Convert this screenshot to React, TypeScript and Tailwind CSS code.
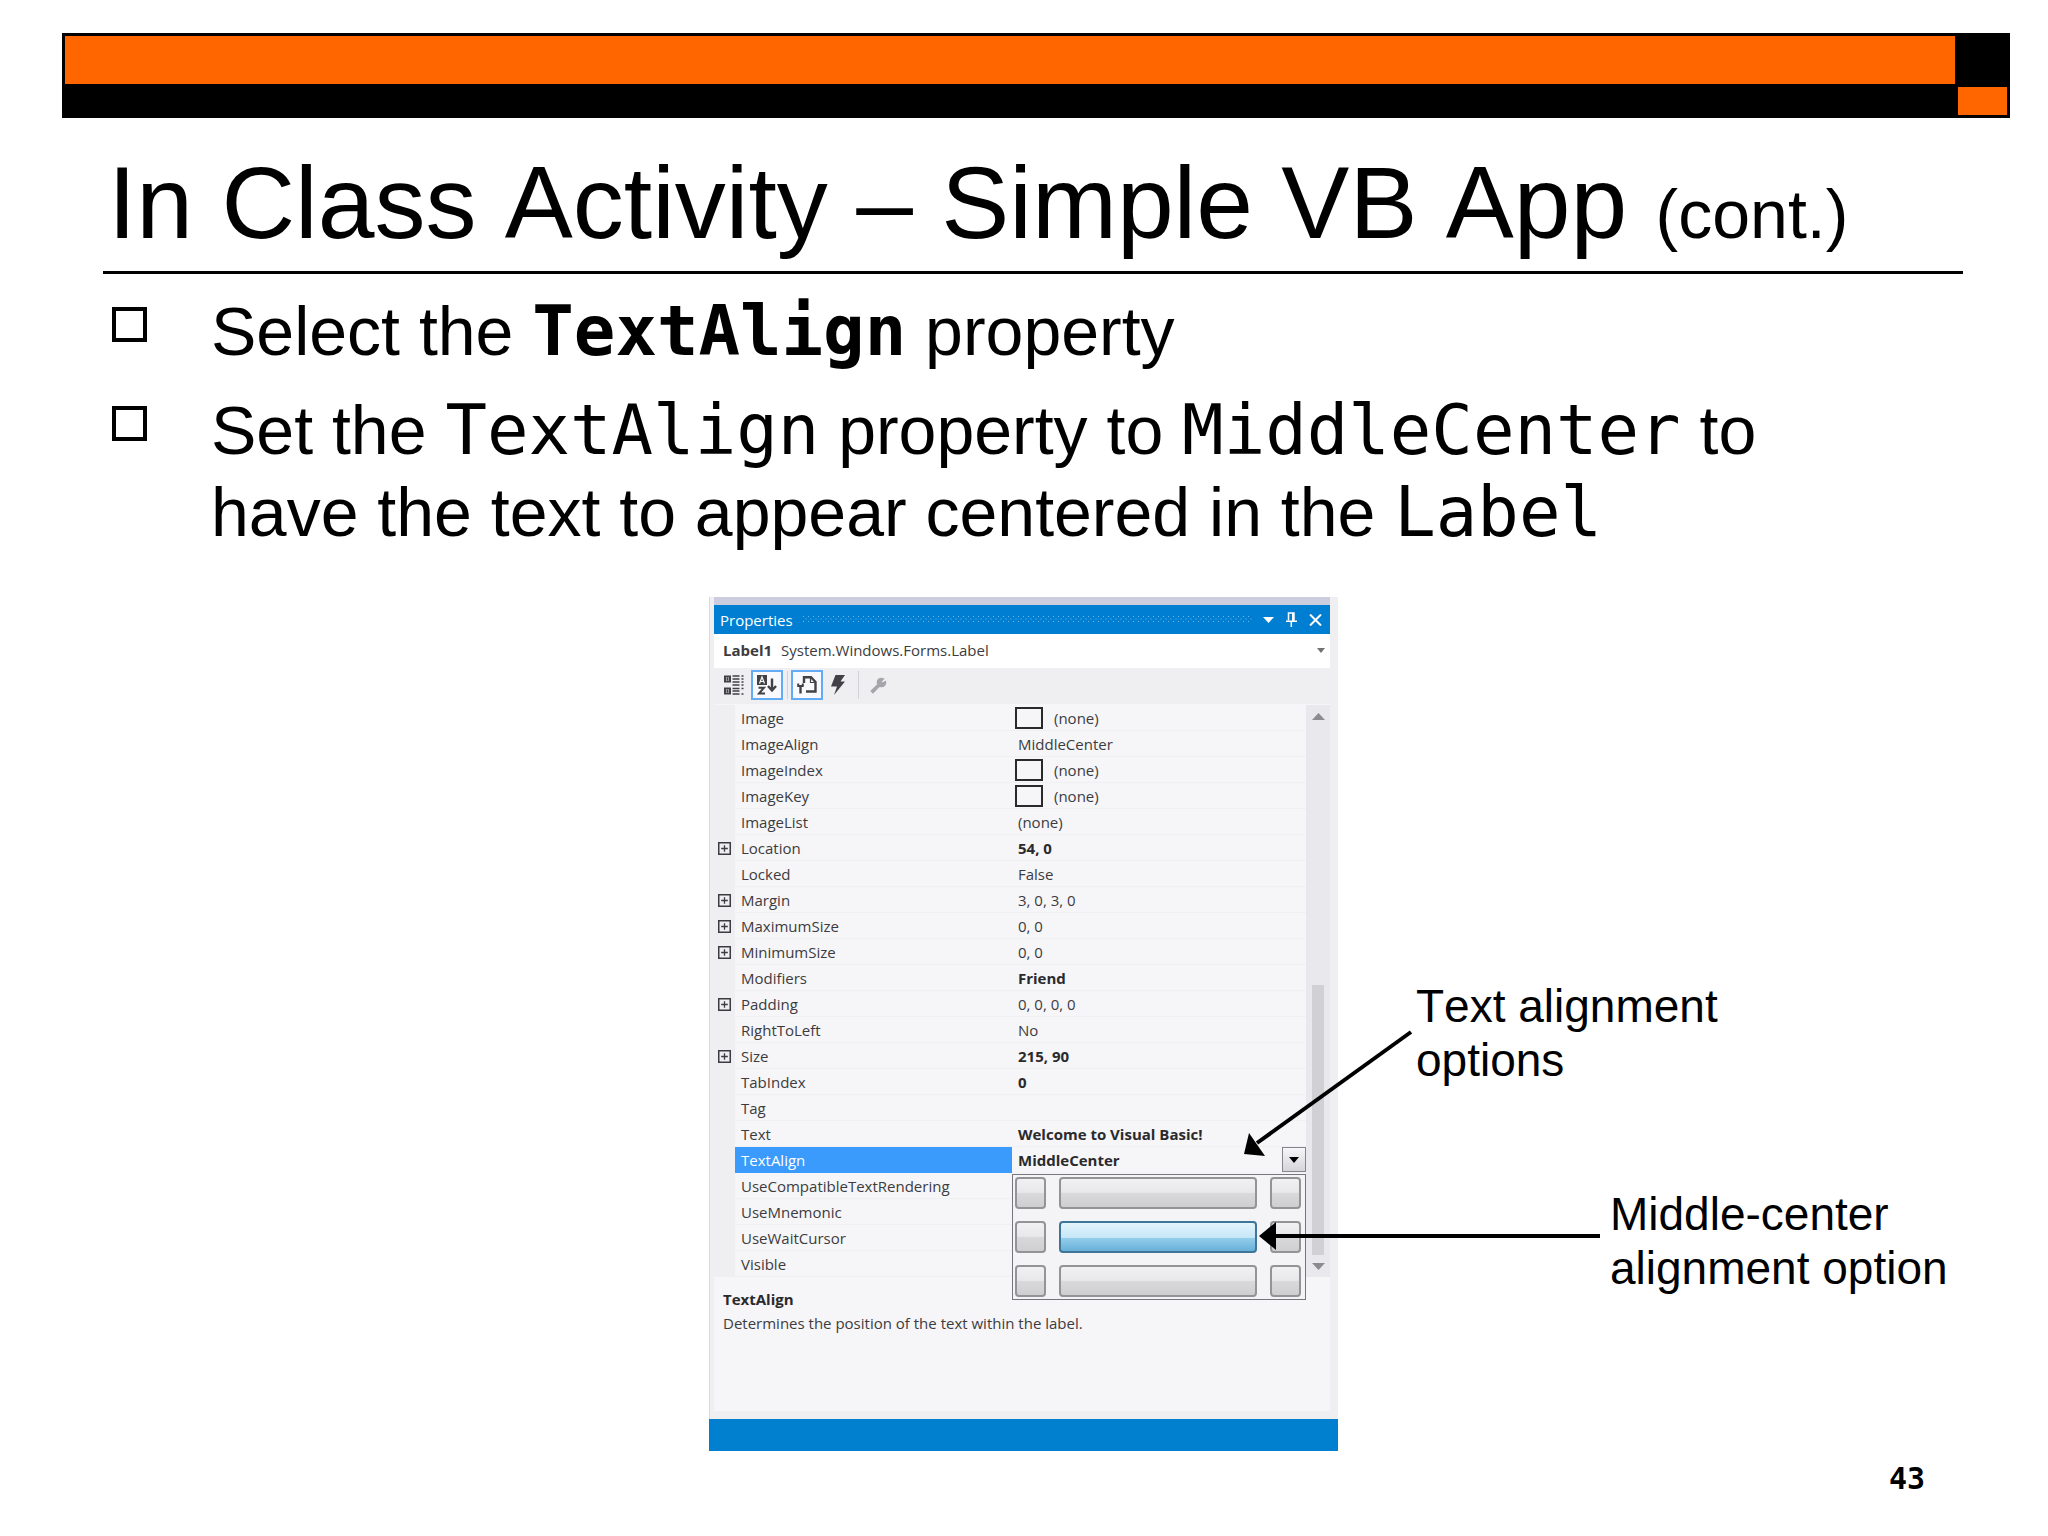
import type { ReactNode } from "react";

type Property = {
  name: string;
  value: string;
  expandable?: boolean;
  swatch?: boolean;
  bold?: boolean;
};

const properties: Property[] = [
  { name: "Image", value: "(none)", swatch: true },
  { name: "ImageAlign", value: "MiddleCenter" },
  { name: "ImageIndex", value: "(none)", swatch: true },
  { name: "ImageKey", value: "(none)", swatch: true },
  { name: "ImageList", value: "(none)" },
  { name: "Location", value: "54, 0", expandable: true, bold: true },
  { name: "Locked", value: "False" },
  { name: "Margin", value: "3, 0, 3, 0", expandable: true },
  { name: "MaximumSize", value: "0, 0", expandable: true },
  { name: "MinimumSize", value: "0, 0", expandable: true },
  { name: "Modifiers", value: "Friend", bold: true },
  { name: "Padding", value: "0, 0, 0, 0", expandable: true },
  { name: "RightToLeft", value: "No" },
  { name: "Size", value: "215, 90", expandable: true, bold: true },
  { name: "TabIndex", value: "0", bold: true },
  { name: "Tag", value: "" },
  { name: "Text", value: "Welcome to Visual Basic!", bold: true },
  { name: "TextAlign", value: "MiddleCenter", bold: true },
  { name: "UseCompatibleTextRendering", value: "" },
  { name: "UseMnemonic", value: "" },
  { name: "UseWaitCursor", value: "" },
  { name: "Visible", value: "" },
];

const SELECTED = "TextAlign";

const alignments = [
  "TopLeft",
  "TopCenter",
  "TopRight",
  "MiddleLeft",
  "MiddleCenter",
  "MiddleRight",
  "BottomLeft",
  "BottomCenter",
  "BottomRight",
];

function Banner() {
  return (
    <div className="flex h-[85px] bg-black" aria-hidden="true">
      <div className="flex-1 pt-[3px] pl-[3px]">
        <div className="h-12 bg-[#ff6600]" />
      </div>
      <div className="flex w-[55px] flex-col justify-end border-[3px] border-black">
        <div className="h-7 bg-[#ff6600]" />
      </div>
    </div>
  );
}

function Bullet({ children }: { children: ReactNode }) {
  return (
    <li className="flex">
      <span className="mt-[17px] mr-16 size-[35px] shrink-0 border-4 border-black" />
      <p>{children}</p>
    </li>
  );
}

function Code({ children }: { children: ReactNode }) {
  return (
    <code className="font-['DejaVu_Sans_Mono',monospace] text-[69px] leading-none">{children}</code>
  );
}

function TitleBar() {
  return (
    <div className="flex h-[29px] items-center bg-[#007fd2] pr-2 pl-[6px] text-white">
      <h2>Properties</h2>
      <svg className="mx-[10px] h-[7px] flex-1" aria-hidden="true">
        <defs>
          <pattern id="grip" width="5" height="5" patternUnits="userSpaceOnUse">
            <rect width="1" height="1" fill="#6cb8ea" />
            <rect x="2.5" y="2.5" width="1" height="1" fill="#6cb8ea" />
          </pattern>
        </defs>
        <rect width="100%" height="7" fill="url(#grip)" />
      </svg>
      <div className="flex items-center gap-3">
        <button aria-label="Window position">
          <svg width="11" height="6" viewBox="0 0 11 6">
            <path d="M0 0h11L5.500 6z" fill="#fff" />
          </svg>
        </button>
        <button aria-label="Auto hide">
          <svg width="11" height="15" viewBox="0 0 11 15" fill="none" stroke="#fff">
            <path d="M2.500 8.500V1h5.500v8" strokeWidth="1.500" />
            <path d="M7 1v8" strokeWidth="2" />
            <path d="M0 9.300h11M5.300 9.500V15" strokeWidth="1.500" />
          </svg>
        </button>
        <button aria-label="Close">
          <svg width="13" height="12" viewBox="0 0 13 12" stroke="#fff" strokeWidth="2">
            <path d="M1 .5l11 11M12 .5l-11 11" />
          </svg>
        </button>
      </div>
    </div>
  );
}

function Toolbar() {
  return (
    <div className="flex h-9 items-center bg-[#efeef1] pb-[2px] pl-[10px] text-[#424246]">
      <button aria-label="Categorized" className="mr-[7px]">
        <svg width="20" height="20" viewBox="0 0 20 20" fill="none" stroke="currentColor">
          <path d="M1 1.500h5v5H1zM1 13.500h5v5H1z" strokeWidth="2" />
          <path d="M2 4h3M3.500 2.500v3M2 16h3M3.500 14.500v3" />
          <path
            d="M8.500 1h7M8.500 4h7M8.500 7h7M8.500 10h7M8.500 13.500h7M8.500 16h7M8.500 19h7"
            strokeWidth="1.300"
          />
          <path d="M17.500 1h2M17.500 4h2M17.500 7h2M17.500 10h2M17.500 13.500h2M17.500 19h2" strokeWidth="1.300" />
        </svg>
      </button>
      <button
        aria-label="Alphabetical"
        className="flex h-[30px] w-8 items-center justify-center border-2 border-[#62acf5] bg-[#f7f9fc]"
      >
        <svg width="20" height="20" viewBox="0 0 20 20" fill="none" stroke="currentColor">
          <path d="M0 0h10v10H0z" fill="currentColor" stroke="none" />
          <path d="M2.500 8.500L5 2l2.500 6.500M3.300 6.500h3.400" stroke="#f7f9fc" strokeWidth="1.200" />
          <path d="M1.500 12.700h5.500L2 18.500h6" strokeWidth="2" />
          <path d="M15 3.500v12M11 11l4 4.500 4-4.500" strokeWidth="2.400" />
        </svg>
      </button>
      <span className="mr-[3px] ml-1 h-7 w-px bg-[#d2d2d8]" />
      <button
        aria-label="Properties"
        className="flex h-[30px] w-8 items-center justify-center border-2 border-[#62acf5] bg-[#f7f9fc]"
      >
        <svg width="20" height="18" viewBox="0 0 20 18" fill="none" stroke="currentColor">
          <path d="M7 7V1.200h7L18.500 6v9.500H9" strokeWidth="2.400" />
          <path d="M13.500 1v5.500H19" strokeWidth="1.200" />
          <path d="M1.200 7.500v2.500h4.600V7.500" strokeWidth="2" />
          <path d="M3.500 10v7.500" strokeWidth="2.400" />
        </svg>
      </button>
      <button aria-label="Events" className="ml-2">
        <svg width="15" height="20" viewBox="0 0 15 20" fill="currentColor">
          <path d="M4.500 0H14L9.500 6.500H14L3 20l3-8.500H0z" />
        </svg>
      </button>
      <span className="mr-[11px] ml-3 h-7 w-px bg-[#d2d2d8]" />
      <button aria-label="Property pages" disabled>
        <svg width="17" height="17" viewBox="0 0 16 16" fill="none" stroke="#a5a5aa">
          <path d="M1.500 14.500L8 8" strokeWidth="3.500" />
          <path d="M12.500 1.800A3.800 3.800 0 1 0 14.500 4.500L11.500 6 10 4.300z" fill="#a5a5aa" strokeWidth="1.500" />
        </svg>
      </button>
    </div>
  );
}

function ExpandButton({ name }: { name: string }) {
  return (
    <button aria-label={`Expand ${name}`} className="ml-1 block">
      <svg width="13" height="13" viewBox="0 0 13 13" fill="none" stroke="#3c3c40">
        <path d="M.75.75h11.500v11.500H.75z" strokeWidth="1.500" />
        <path d="M3.200 6.500h6.600M6.500 3.200v6.600" strokeWidth="1.300" />
      </svg>
    </button>
  );
}

function AlignmentPicker() {
  return (
    <div className="absolute top-full right-0 left-0 z-10 mt-[2px] grid grid-cols-[31px_1fr_31px] gap-x-[13px] gap-y-3 border border-[#77777b] bg-[#f4f3f6] py-[2px] pr-[4px] pl-[2px]">
      {alignments.map((alignment) => (
        <button
          key={alignment}
          aria-label={alignment}
          className={
            alignment === "MiddleCenter"
              ? "h-8 rounded-[4px] border-2 border-[#3f7698] bg-[linear-gradient(#e3f4fc,#c6e6f7_52%,#93cdeb_54%,#68b0d9)]"
              : "h-8 rounded-[4px] border-2 border-[#949497] bg-[linear-gradient(#f1f0f2,#e8e7e9_48%,#d9d8da_50%,#cfced1)]"
          }
        />
      ))}
    </div>
  );
}

function PropertyRow({ property }: { property: Property }) {
  const { name, value, expandable, swatch, bold } = property;
  const selected = name === SELECTED;

  return (
    <tr className="h-[26px]">
      <td className="w-[21px] bg-[#efeef1] p-0">{expandable && <ExpandButton name={name} />}</td>
      <th
        scope="row"
        className={
          selected
            ? "w-[277px] bg-[#3a9bfd] p-0 pl-[6px] text-left font-normal text-white"
            : "w-[277px] border-b border-[#f0eff2] p-0 pl-[6px] text-left font-normal"
        }
      >
        {name}
      </th>
      <td className="relative border-b border-[#f0eff2] p-0">
        <div className={bold ? "flex items-center font-bold text-[#2a2a2d]" : "flex items-center"}>
          {swatch && <span className="ml-[3px] h-[22px] w-7 border-2 border-[#2a2a2d]" />}
          <span className={swatch ? "pl-[11px]" : "pl-[6px]"}>{value}</span>
          {selected && (
            <button
              aria-label="Choose alignment"
              className="ml-auto flex h-[25px] w-6 items-center justify-center border border-[#85858a] bg-linear-to-b from-[#f6f5f8] to-[#d6d5d9]"
            >
              <svg width="10" height="6" viewBox="0 0 10 6">
                <path d="M0 0h10L5 6z" />
              </svg>
            </button>
          )}
        </div>
        {selected && <AlignmentPicker />}
      </td>
    </tr>
  );
}

function ScrollBar() {
  return (
    <div className="flex w-6 flex-col items-center bg-[#e9e8ec] pt-[8px] pb-[7px]" aria-hidden="true">
      <svg width="13" height="7" viewBox="0 0 13 7">
        <path d="M0 7h13L6.500 0z" fill="#8b8b92" />
      </svg>
      <div className="mt-auto mb-2 h-[270px] w-3 bg-[#d0d0d5]" />
      <svg width="13" height="7" viewBox="0 0 13 7">
        <path d="M0 0h13L6.500 7z" fill="#8b8b92" />
      </svg>
    </div>
  );
}

function PropertiesWindow() {
  return (
    <section className="w-[629px] border-l border-[#d9d9e2] bg-[#efeef1] font-['Open_Sans','Noto_Sans',sans-serif] text-[15px] leading-5 text-[#3c3c40]">
      <div className="mr-2 ml-1">
        <div className="h-2 bg-[#cccee0]" />
        <TitleBar />
        <div className="flex h-[34px] items-center bg-white pr-[5px] pb-[2px] pl-[9px]">
          <p className="flex-1">
            <b className="mr-[9px]">Label1</b>
            System.Windows.Forms.Label
          </p>
          <svg width="8" height="5" viewBox="0 0 8 5" aria-hidden="true">
            <path d="M0 0h8L4 5z" fill="#707075" />
          </svg>
        </div>
        <Toolbar />
        <div className="flex bg-[#f6f5f8] pt-px">
          <table className="flex-1 table-fixed border-separate border-spacing-0">
            <colgroup>
              <col className="w-[21px]" />
              <col className="w-[277px]" />
              <col />
            </colgroup>
            <tbody>
              {properties.map((property) => (
                <PropertyRow key={property.name} property={property} />
              ))}
            </tbody>
          </table>
          <ScrollBar />
        </div>
        <div className="h-[134px] bg-[#f6f5f8] pt-3 pl-[9px]">
          <h3 className="mb-1 font-bold text-[#2a2a2d]">TextAlign</h3>
          <p>Determines the position of the text within the label.</p>
        </div>
      </div>
      <div className="mt-2 -ml-px h-8 bg-[#0080cf]" />
    </section>
  );
}

// Arrows run over the properties window, so they are drawn in its coordinates.
function Arrows() {
  return (
    <svg
      className="pointer-events-none absolute top-0 left-0 z-20 overflow-visible"
      width="900"
      height="854"
      aria-hidden="true"
    >
      <path d="M702 435L548 546" stroke="#000" strokeWidth="4" />
      <path d="M535 557l5-21 16 23z" />
      <path d="M891 639H565" stroke="#000" strokeWidth="4" />
      <path d="M550 639l17-14v28z" />
    </svg>
  );
}

export default function App() {
  return (
    <main className="min-h-screen bg-white pt-[33px] font-['Liberation_Sans',Arial,sans-serif] text-black [font-kerning:none]">
      <div className="mr-[38px] ml-[62px]">
        <Banner />
      </div>

      <header className="mr-[85px] ml-[103px] border-b-[3px] border-black pt-[21px] pb-1 pl-[5px]">
        <h1 className="text-[102px] leading-[128px]">
          In Class Activity – Simple VB App <span className="text-[68px] leading-none">(cont.)</span>
        </h1>
      </header>

      <ul className="mt-4 mr-[85px] ml-[112px] flex flex-col gap-[17px] text-[68px] leading-[82px]">
        <Bullet>
          Select the{" "}
          <b>
            <Code>TextAlign</Code>
          </b>{" "}
          property
        </Bullet>
        <Bullet>
          Set the <Code>TextAlign</Code> property to <Code>MiddleCenter</Code> to
          <br />
          have the text to appear centered in the <Code>Label</Code>
        </Bullet>
      </ul>

      <div className="relative mt-11 ml-[709px] flex">
        <PropertiesWindow />
        <div className="flex flex-col pt-[382px] pl-[78px] text-[46px] leading-[54px]">
          <p>
            Text alignment
            <br />
            options
          </p>
          <p className="mt-[100px] ml-[194px]">
            Middle-center
            <br />
            alignment option
          </p>
        </div>
        <Arrows />
      </div>

      <footer className="mt-3 mr-[123px] text-right font-['DejaVu_Sans_Mono',monospace] text-[30px] leading-8 font-bold">
        43
      </footer>
    </main>
  );
}
